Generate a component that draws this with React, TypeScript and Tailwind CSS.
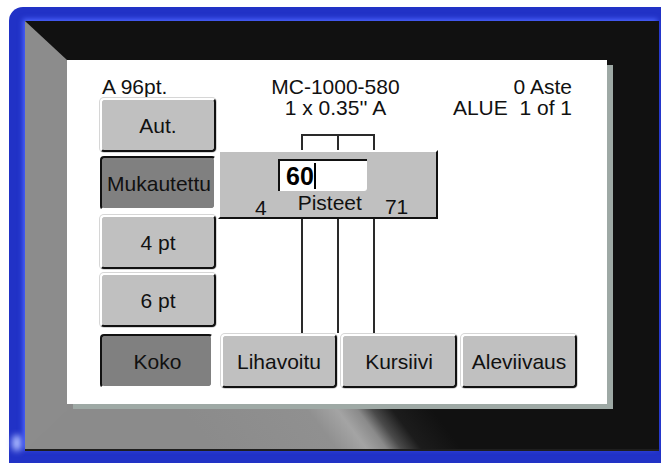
import clsx from "clsx";

function Btn({ label, pressed, className }: { label: string; pressed?: boolean; className?: string }) {
  return (
    <div
      className={clsx(
        "flex items-center justify-center whitespace-nowrap rounded-[4px] border-2 text-[21px] leading-[21px] text-[#111]",
        pressed
          ? "bg-[#808080] border-t-[#111] border-l-[#111] border-r-white border-b-white pl-[2px] pt-[1px]"
          : "bg-[#c0c0c0] border-t-white border-l-white border-r-[#111] border-b-[#111] shadow-[0_0_0_1px_#d6d6d6]",
        className
      )}
    >
      {label}
    </div>
  );
}

function Popup() {
  return (
    <div className="h-[69px] w-[220px] overflow-hidden border-2 border-t-white border-l-white border-r-[#111] border-b-[#111] bg-[#c0c0c0] pt-[7px]">
      <div className="ml-[58px] flex h-[32px] w-[89px] items-center rounded-br-[3px] border-t-2 border-l-2 border-[#111] bg-white pl-[6px]">
        <span className="text-[25px] font-bold leading-[26px] text-black">60</span>
        <span className="h-[26px] w-[2px] bg-black" />
      </div>
      <div className="flex items-start text-[21px] leading-[19px] text-[#111]">
        <span className="ml-[35px] mt-[7px]">4</span>
        <span className="ml-[31px] mt-[2px]">Pisteet</span>
        <span className="ml-[23px] mt-[6px]">71</span>
      </div>
    </div>
  );
}

function Bezel() {
  return (
    <svg className="absolute inset-0" width="634" height="430" viewBox="0 0 634 430">
      <defs>
        <linearGradient id="glare" gradientUnits="userSpaceOnUse" x1="240" y1="499" x2="400" y2="379">
          <stop offset="0" stopColor="#8b8b8b" />
          <stop offset="0.5" stopColor="#909090" />
          <stop offset="0.62" stopColor="#a4a4a4" />
          <stop offset="0.7" stopColor="#8a8a8a" />
          <stop offset="0.76" stopColor="#4a4a4a" />
          <stop offset="0.84" stopColor="#1c1c1c" />
          <stop offset="1" stopColor="#111" />
        </linearGradient>
      </defs>
      <rect width="634" height="430" fill="#111" />
      <polygon points="0,0 42,39 42,390 0,430" fill="#8c8c8c" />
      <rect x="0" y="383" width="634" height="47" fill="url(#glare)" />
      <polygon points="0,383 42,383 42,390 0,430" fill="#8c8c8c" />
      <rect x="0" y="428" width="634" height="2" fill="#1e1e1e" />
    </svg>
  );
}

export default function App() {
  return (
    <div className="h-[463px] w-[661px] overflow-hidden bg-white pl-[9px] pt-[7px] font-['Liberation_Sans',Arial,sans-serif]">
      <div className="relative h-[456px] w-[652px] rounded-tl-[14px] bg-[#2132c6] pl-[16px] pr-[2px] pt-[14px]">
        <span className="absolute bottom-[12px] left-[3px] h-[16px] w-[10px] rounded-full bg-[#a9b8ff] blur-[3px]" />
        <div className="relative h-[430px] w-[634px] bg-[#111] pl-[42px] pt-[39px] shadow-[-2px_-2px_5px_#4d66ff]">
          <Bezel />
          <div className="relative h-[344px] w-[540px] bg-white pl-[33px] pt-[16px] text-[21px] leading-[21px] text-[#111] shadow-[6px_5px_0_#9ea9a5]">
            <div className="flex gap-[2px]">
              <div className="flex w-[116px] flex-col">
                <div className="pl-[2px]">A 96pt.</div>
                <Btn className="mt-[1px] h-[54px]" label="Aut." />
                <Btn pressed className="mt-[4px] h-[54px]" label="Mukautettu" />
                <Btn className="mt-[5px] h-[54px]" label="4 pt" />
                <Btn className="mt-[4px] h-[54px]" label="6 pt" />
              </div>
              <div className="flex w-[354px] flex-col">
                <div className="flex">
                  <div className="w-[236px] text-center">
                    MC-1000-580
                    <br />
                    1 x 0.35'' A
                  </div>
                  <div className="flex-1 whitespace-pre text-right">{"0 Aste\nALUE  1 of 1"}</div>
                </div>
                <svg className="mt-[16px]" width="220" height="16">
                  <rect x="83" y="0" width="74" height="2" fill="#2a2a2a" />
                  <rect x="83" y="0" width="2" height="16" fill="#2a2a2a" />
                  <rect x="119" y="0" width="2" height="16" fill="#2a2a2a" />
                  <rect x="155" y="0" width="2" height="16" fill="#2a2a2a" />
                </svg>
                <Popup />
                <svg width="220" height="114">
                  <rect x="83" y="0" width="2" height="114" fill="#2a2a2a" />
                  <rect x="119" y="0" width="2" height="114" fill="#2a2a2a" />
                  <rect x="155" y="0" width="2" height="114" fill="#2a2a2a" />
                </svg>
              </div>
            </div>
            <div className="mt-[1px] flex h-[54px]">
              <Btn pressed className="w-[113px]" label="Koko" />
              <Btn className="ml-[8px] w-[116px]" label="Lihavoitu" />
              <Btn className="ml-[4px] w-[116px]" label="Kursiivi" />
              <Btn className="ml-[4px] w-[116px]" label="Aleviivaus" />
            </div>
          </div>
        </div>
      </div>
    </div>
  );
}
